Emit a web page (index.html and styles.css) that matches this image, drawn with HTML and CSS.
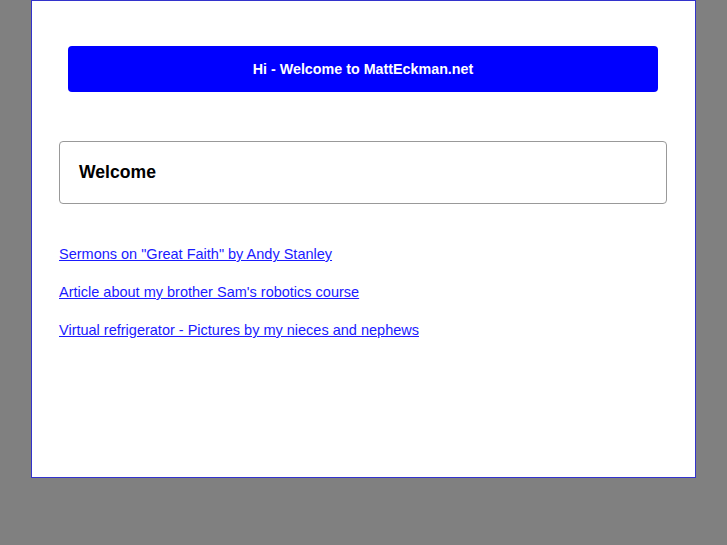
FILE: index.html
```html
<!DOCTYPE html>
<html lang="en">
<head>
  <meta charset="UTF-8">
  <title>MattEckman.net</title>
  <link rel="stylesheet" href="styles.css">
</head>
<body>
  <div class="page">
    <div class="banner">Hi - Welcome to MattEckman.net</div>

    <div class="welcome-box">
      <h2>Welcome</h2>
    </div>

    <ul class="links">
      <li><a href="#">Sermons on "Great Faith" by Andy Stanley</a></li>
      <li><a href="#">Article about my brother Sam's robotics course</a></li>
      <li><a href="#">Virtual refrigerator - Pictures by my nieces and nephews</a></li>
    </ul>
  </div>
</body>
</html>
```

FILE: styles.css
```css
body {
  margin: 0;
  background: #808080;
  font-family: 'Liberation Sans', Arial, sans-serif;
}
.page {
  width: 608px;
  height: 476px;
  margin: 0 auto;
  padding: 0 28px 0 27px;
  background: #fff;
  border: 1px solid #3333cc;
}
.banner {
  margin: 45px 9px 0;
  height: 46px;
  line-height: 46px;
  background: #0000ff;
  color: #fff;
  border-radius: 4px;
  text-align: center;
  font-weight: bold;
  font-size: 14.3px;
}
.welcome-box {
  margin-top: 49px;
  height: 61px;
  border: 1px solid #999;
  border-radius: 4px;
  display: flex;
  align-items: center;
  padding: 0 19px;
}
.welcome-box h2 {
  margin: 0;
  font-size: 17.6px;
}
.links {
  list-style: none;
  margin: 42px 0 0;
  padding: 0;
}
.links li {
  font-size: 14.5px;
  line-height: 17px;
  margin-bottom: 21px;
}
.links a {
  color: #1a1aff;
}
```
